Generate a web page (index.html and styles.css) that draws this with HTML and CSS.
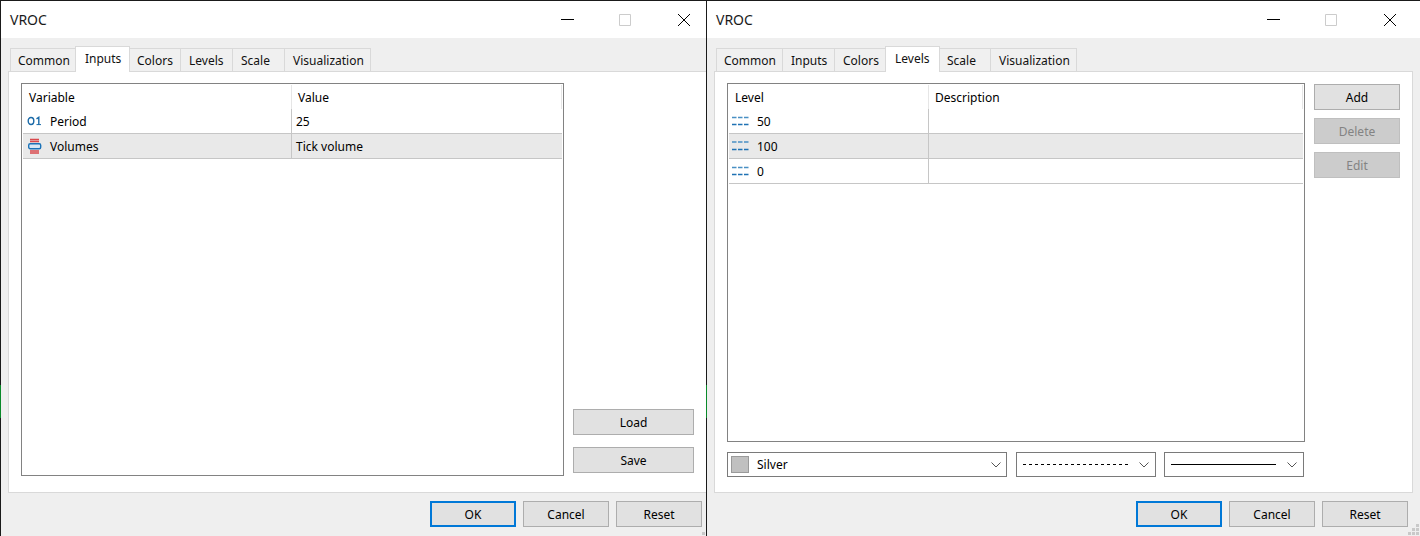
FILE: index.html
```html
<!DOCTYPE html>
<html lang="en">
<head>
<meta charset="utf-8">
<title>VROC</title>
<link rel="stylesheet" href="styles.css">
</head>
<body>
<main class="desktop">
  <div class="clip">
    <section class="window">
      <header class="titlebar">
        <h1 class="title">VROC</h1>
        <div class="controls">
          <svg class="ctl" width="14" height="14" viewBox="0 0 14 14"><path d="M0 6.500H13" stroke="#000" fill="none"/></svg>
          <svg class="ctl" width="14" height="14" viewBox="0 0 14 14"><path d="M1.500 1.500H12.500V12.500H1.500Z" stroke="#ccc" fill="none"/></svg>
          <svg class="ctl" width="14" height="14" viewBox="0 0 14 14"><path d="M1 1L13 13M13 1L1 13" stroke="#000" fill="none"/></svg>
        </div>
      </header>
      <div class="body">
        <nav class="tabs">
          <div class="tab">Common</div>
          <div class="tab active">Inputs</div>
          <div class="tab">Colors</div>
          <div class="tab">Levels</div>
          <div class="tab">Scale</div>
          <div class="tab">Visualization</div>
        </nav>
        <div class="panel panel-inputs">
          <div class="list list-inputs">
            <div class="row head cols-inputs">
              <div class="cell head-cell">Variable</div>
              <div class="cell head-cell">Value</div>
            </div>
            <div class="row cols-inputs">
              <div class="cell name">
                <svg class="ico" width="16" height="16" viewBox="0 0 16 16"><ellipse cx="3" cy="7" rx="2.800" ry="3.500" fill="none" stroke="#1a6aa8" stroke-width="1.400"/><path d="M8.500 4.800L10.800 3.300V10.800" fill="none" stroke="#1a6aa8" stroke-width="1.400"/><path d="M8.500 10.600H13" fill="none" stroke="#1a6aa8" stroke-width="1"/></svg>
                <span>Period</span>
              </div>
              <div class="cell">25</div>
            </div>
            <div class="row selected cols-inputs">
              <div class="cell name">
                <svg class="ico" width="16" height="16" viewBox="0 0 16 16"><path d="M2 .5H11M2 2.500H11M2 12H11M2 14H11" stroke="#d9484c" stroke-width="1.300" fill="none"/><rect x=".7" y="4.700" width="12" height="5" rx="1.500" fill="#d8e8f5" stroke="#1a72b8" stroke-width="1.400"/></svg>
                <span>Volumes</span>
              </div>
              <div class="cell">Tick volume</div>
            </div>
          </div>
          <div class="side side-end">
            <button class="btn wide">Load</button>
            <button class="btn wide">Save</button>
          </div>
        </div>
        <footer class="footer">
          <button class="btn primary">OK</button>
          <button class="btn">Cancel</button>
          <button class="btn">Reset</button>
        </footer>
      </div>
      <div class="sliver"></div>
      <svg class="grip" width="12" height="12" viewBox="0 0 12 12"><path d="M8 0h3v3H8zM4 4h3v3H4zM8 4h3v3H8zM0 8h3v3H0zM4 8h3v3H4zM8 8h3v3H8z" fill="#c9c9c9"/></svg>
    </section>
  </div>

  <section class="window">
    <header class="titlebar">
      <h1 class="title">VROC</h1>
      <div class="controls">
        <svg class="ctl" width="14" height="14" viewBox="0 0 14 14"><path d="M0 6.500H13" stroke="#000" fill="none"/></svg>
        <svg class="ctl" width="14" height="14" viewBox="0 0 14 14"><path d="M1.500 1.500H12.500V12.500H1.500Z" stroke="#ccc" fill="none"/></svg>
        <svg class="ctl" width="14" height="14" viewBox="0 0 14 14"><path d="M1 1L13 13M13 1L1 13" stroke="#000" fill="none"/></svg>
      </div>
    </header>
    <div class="body">
      <nav class="tabs">
        <div class="tab">Common</div>
        <div class="tab">Inputs</div>
        <div class="tab">Colors</div>
        <div class="tab active">Levels</div>
        <div class="tab">Scale</div>
        <div class="tab">Visualization</div>
      </nav>
      <div class="panel panel-levels">
        <div class="levels-main">
          <div class="list list-levels">
            <div class="row head cols-levels">
              <div class="cell head-cell">Level</div>
              <div class="cell head-cell">Description</div>
            </div>
            <div class="row cols-levels">
              <div class="cell name">
                <svg class="ico" width="18" height="16" viewBox="0 0 18 16"><path d="M0 3.500H4.500M6 3.500H10.500M12 3.500H16.500" stroke="#4a90c4" stroke-width="1.600" fill="none"/><path d="M0 10.500H4.500M6 10.500H10.500M12 10.500H16.500" stroke="#1f72b4" stroke-width="1.600" fill="none"/></svg>
                <span>50</span>
              </div>
              <div class="cell"></div>
            </div>
            <div class="row selected cols-levels">
              <div class="cell name">
                <svg class="ico" width="18" height="16" viewBox="0 0 18 16"><path d="M0 3H4.500M6 3H10.500M12 3H16.500" stroke="#4a90c4" stroke-width="1.600" fill="none"/><path d="M0 10.500H4.500M6 10.500H10.500M12 10.500H16.500" stroke="#1f72b4" stroke-width="1.600" fill="none"/></svg>
                <span>100</span>
              </div>
              <div class="cell"></div>
            </div>
            <div class="row cols-levels">
              <div class="cell name">
                <svg class="ico" width="18" height="16" viewBox="0 0 18 16"><path d="M0 3.500H4.500M6 3.500H10.500M12 3.500H16.500" stroke="#4a90c4" stroke-width="1.600" fill="none"/><path d="M0 10.500H4.500M6 10.500H10.500M12 10.500H16.500" stroke="#1f72b4" stroke-width="1.600" fill="none"/></svg>
                <span>0</span>
              </div>
              <div class="cell"></div>
            </div>
          </div>
          <div class="combos">
            <div class="combo combo-color">
              <span class="swatch"></span>
              <span class="combo-text">Silver</span>
              <svg class="chev" width="10" height="6" viewBox="0 0 10 6"><path d="M.5.500L5 5L9.500.500" fill="none" stroke="#555"/></svg>
            </div>
            <div class="combo combo-line">
              <span class="line dashed"></span>
              <svg class="chev" width="10" height="6" viewBox="0 0 10 6"><path d="M.5.500L5 5L9.500.500" fill="none" stroke="#555"/></svg>
            </div>
            <div class="combo combo-line">
              <span class="line solid"></span>
              <svg class="chev" width="10" height="6" viewBox="0 0 10 6"><path d="M.5.500L5 5L9.500.500" fill="none" stroke="#555"/></svg>
            </div>
          </div>
        </div>
        <div class="side side-start">
          <button class="btn">Add</button>
          <button class="btn" disabled>Delete</button>
          <button class="btn" disabled>Edit</button>
        </div>
      </div>
      <footer class="footer">
        <button class="btn primary">OK</button>
        <button class="btn">Cancel</button>
        <button class="btn">Reset</button>
      </footer>
    </div>
    <div class="sliver"></div>
    <svg class="grip" width="12" height="12" viewBox="0 0 12 12"><path d="M8 0h3v3H8zM4 4h3v3H4zM8 4h3v3H8zM0 8h3v3H0zM4 8h3v3H4zM8 8h3v3H8z" fill="#c9c9c9"/></svg>
  </section>
</main>
</body>
</html>
```

FILE: styles.css
```css
* { box-sizing: border-box; }
html, body { margin: 0; padding: 0; height: 100%; overflow: hidden; background: #efefef; }
body { font: 12px/16px "Noto Sans", "Open Sans", sans-serif; color: #000; }

.desktop { display: flex; width: 1420px; height: 536px; }
.clip { width: 706px; height: 536px; overflow: hidden; flex: none; }

.window {
  position: relative;
  width: 714px;
  height: 536px;
  flex: none;
  border-left: 1px solid #1a1a1a;
  border-top: 1px solid #1a1a1a;
  display: flex;
  flex-direction: column;
  background: #efefef;
}

.titlebar {
  height: 37px;
  flex: none;
  background: #fff;
  display: flex;
  align-items: center;
  justify-content: space-between;
  padding-left: 9px;
}
.title { margin: 0; font-size: 14px; font-weight: 400; line-height: 20px; color: #1a1a1a; }
.controls { display: flex; gap: 45px; padding-right: 23px; }
.ctl { display: block; }
.ctl:first-child { margin-right: -2px; }

.body { flex: 1; display: flex; flex-direction: column; padding: 8px 7px 0; min-height: 0; }

.tabs {
  display: grid;
  grid-template-columns: 66px 52px 52px 52px 52px 86px;
  justify-content: start;
  align-items: end;
  height: 26px;
  margin: 0 0 -1px 2px;
  position: relative;
  z-index: 1;
}
.tab {
  height: 23px;
  margin-bottom: 1px;
  margin-right: -1px;
  padding-left: 8px;
  background: #f0f0f0;
  border: 1px solid #d9d9d9;
  border-bottom: 0;
  line-height: 23px;
  color: #111;
}
.tab:first-child { padding-left: 7px; }
.tab.active {
  height: 26px;
  margin: 0 -2px 0 -1px;
  padding-left: 9px;
  background: #fff;
  line-height: 24px;
  position: relative;
  z-index: 1;
}

.panel {
  height: 422px;
  flex: none;
  background: #fff;
  border: 1px solid #d9d9d9;
  padding: 11px 12px 0;
  display: flex;
  gap: 9px;
}

.list { border: 1px solid #828282; background: #fff; padding: 0 1px; }
.list-inputs { width: 543px; height: 393px; }
.levels-main { display: flex; flex-direction: column; gap: 10px; width: 578px; }
.list-levels { height: 359px; }

.row { display: grid; height: 25px; border-bottom: 1px solid #c6c6c6; }
.row.head { border-bottom: 0; }
.cols-inputs { grid-template-columns: 268px 1fr; }
.cols-levels { grid-template-columns: 199px 1fr; }
.selected { background: #e9e9e9; }

.cell {
  display: flex;
  align-items: center;
  padding: 2px 0 0 4px;
  min-width: 0;
  border-left: 1px solid #c6c6c6;
}
.cell.name { border-left: 0; padding-left: 5px; gap: 6px; }
.cols-levels .cell.name { padding-left: 3px; gap: 7px; }
.cell.head-cell { padding-left: 6px; margin-top: 1px; border-left: 1px solid #e6e6e6; }
.cell.head-cell:first-child { border-left: 0; }
.cell.head-cell:last-child { border-right: 1px solid #e6e6e6; }
.ico { flex: none; display: block; overflow: visible; }

.side { display: flex; flex-direction: column; }
.side-end { justify-content: flex-end; gap: 12px; height: 390px; }
.side-start { gap: 8px; padding-top: 1px; }

.btn {
  width: 86px;
  height: 26px;
  flex: none;
  padding: 2px 0 0;
  background: #e1e1e1;
  border: 1px solid #adadad;
  font: inherit;
  color: #000;
}
.btn.wide { width: 121px; }
.btn:disabled { background: #ccc; border-color: #bfbfbf; color: #838383; }
.btn.primary { border: 2px solid #0078d7; }

.combos { display: flex; gap: 9px; }
.combo {
  height: 25px;
  border: 1px solid #7a7a7a;
  background: #fff;
  display: flex;
  align-items: center;
  flex: none;
}
.combo-color { width: 280px; padding: 0 3px; }
.combo-line { width: 140px; padding: 0 6px; }
.combos .combo-line:last-child { margin-left: -1px; }
.swatch { width: 18px; height: 17px; background: #c0c0c0; border: 1px solid #9a9a9a; flex: none; }
.combo-text { margin-left: 8px; flex: 1; }
.chev { flex: none; margin-left: auto; }
.combo-color .chev { margin-right: 2px; }
.line { flex: none; width: 105px; height: 1px; }
.line.dashed { background: repeating-linear-gradient(90deg, #000 0 3px, transparent 3px 6px); }
.line.solid { background: #000; }

.footer { display: flex; justify-content: flex-end; gap: 7px; padding: 8px 5px 0 0; }

.sliver { position: absolute; left: -1px; top: 384px; width: 1px; height: 33px; background: #0a8a2a; }
.grip { position: absolute; right: 0; bottom: 0; }
```
